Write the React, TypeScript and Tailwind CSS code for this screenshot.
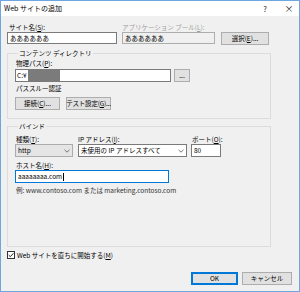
import React from "react";

const font = { fontFamily: '"Noto Sans CJK JP", "Noto Sans", sans-serif' };

function U({ c }: { c: string }) {
  return <span className="underline underline-offset-[1px]">{c}</span>;
}

function Chevron() {
  return (
    <svg width="6" height="4" viewBox="0 0 6 4" className="shrink-0">
      <path d="M0.5 0.8 L3 3.2 L5.5 0.8" fill="none" stroke="#555" strokeWidth="0.8" />
    </svg>
  );
}

function Btn({ children, w, def }: { children: React.ReactNode; w: string; def?: boolean }) {
  return (
    <div
      className={`${w} h-[13px] flex items-center justify-center bg-[#e1e1e1] border ${
        def ? "border-[#0078d7] shadow-[inset_0_0_0_1px_#0078d7]" : "border-[#adadad]"
      } text-black leading-none whitespace-nowrap overflow-visible`}
    >
      {children}
    </div>
  );
}

export default function App() {
  return (
    <div
      className="w-[300px] h-[292px] border border-[#6ea6e0] bg-[#f0f0f0] flex flex-col text-[6.5px] text-black overflow-hidden whitespace-nowrap"
      style={font}
    >
      {/* title bar */}
      <div className="h-[15px] bg-white flex items-center pl-[3px] shrink-0">
        <span className="text-[7px] leading-none">Web サイトの追加</span>
        <span className="ml-auto w-[10px] text-center text-[7.5px] leading-none text-[#222]">?</span>
        <span className="ml-[14px] mr-[5px] w-[10px] text-center text-[9px] leading-none text-[#222]">×</span>
      </div>

      <div className="pl-[6px] flex flex-col">
        {/* row 1 */}
        <div className="mt-[7px] flex">
          <div className="w-[110px] flex flex-col">
            <div className="h-[8px] leading-[8px] pl-[2px]">
              サイト名(<U c="S" />):
            </div>
            <div className="mt-[1px] h-[12px] border border-[#7a7a7a] bg-white flex items-center pl-[2px] leading-none">
              ああああああ
            </div>
          </div>
          <div className="ml-[5px] w-[93px] flex flex-col">
            <div className="h-[8px] leading-[8px] text-[#a0a0a0]">
              アプリケーション プール(<U c="L" />):
            </div>
            <div className="mt-[1px] h-[12px] border border-[#adadad] bg-[#f0f0f0] flex items-center pl-[2px] leading-none">
              ああああああ
            </div>
          </div>
          <div className="ml-[6px] flex flex-col">
            <div className="h-[8px]" />
            <div className="mt-[1px]">
              <Btn w="w-[48px]">
                選択(<U c="E" />)...
              </Btn>
            </div>
          </div>
        </div>

        {/* content directory */}
        <fieldset className="mt-[4px] w-[264px] h-[70px] border border-[#dcdcdc] pl-[7px]">
          <legend className="ml-[3px] px-[1px] leading-[8px] h-[8px]">コンテンツ ディレクトリ</legend>
          <div className="mt-[2px] h-[8px] leading-[8px] pl-[1px]">
            物理パス(<U c="P" />):
          </div>
          <div className="mt-[2px] flex">
            <div className="w-[156px] h-[13px] border border-[#7a7a7a] bg-white flex items-stretch leading-none">
              <span className="pl-[1px] flex items-center">C:¥</span>
              <span className="ml-[1px] w-[32px] bg-[#7b7b7b]" />
            </div>
            <div className="ml-[3px]">
              <Btn w="w-[16px]">...</Btn>
            </div>
          </div>
          <div className="mt-[2px] h-[8px] leading-[8px] pl-[1px]">パススルー認証</div>
          <div className="mt-[5px] flex gap-[6px]">
            <Btn w="w-[45px]">
              接続(<U c="C" />)...
            </Btn>
            <Btn w="w-[45px]">
              <span className="tracking-[-0.2px]">
                テスト設定(<U c="G" />)...
              </span>
            </Btn>
          </div>
        </fieldset>

        {/* bind */}
        <fieldset className="mt-[3px] w-[264px] h-[125px] border border-[#dcdcdc] pl-[7px]">
          <legend className="ml-[3px] px-[1px] leading-[8px] h-[8px]">バインド</legend>
          <div className="mt-[5px] flex">
            <div className="w-[58px] flex flex-col">
              <div className="h-[8px] leading-[8px] pl-[1px]">
                種類(<U c="T" />):
              </div>
              <div className="mt-[1px] h-[13px] border border-[#acacac] bg-[#e5e5e5] flex items-center pl-[2px] pr-[2px] leading-none">
                <span>http</span>
                <span className="ml-auto">
                  <Chevron />
                </span>
              </div>
            </div>
            <div className="ml-[5px] w-[109px] flex flex-col">
              <div className="h-[8px] leading-[8px]">
                IP アドレス(<U c="I" />):
              </div>
              <div className="mt-[1px] h-[13px] border border-[#7a7a7a] bg-white flex items-center pl-[2px] pr-[2px] leading-none">
                <span>未使用の IP アドレスすべて</span>
                <span className="ml-auto">
                  <Chevron />
                </span>
              </div>
            </div>
            <div className="ml-[4px] w-[30px] flex flex-col">
              <div className="h-[8px] leading-[8px] pl-[1px] whitespace-nowrap">
                ポート(<U c="O" />):
              </div>
              <div className="mt-[1px] h-[13px] border border-[#7a7a7a] bg-white flex items-center pl-[2px] leading-none">
                80
              </div>
            </div>
          </div>
          <div className="mt-[4px] h-[8px] leading-[8px] pl-[1px]">
            ホスト名(<U c="H" />):
          </div>
          <div className="mt-[1px] w-[154px] h-[13px] border border-[#0078d7] bg-white flex items-center pl-[2px] leading-none">
            <span>aaaaaaaa.com</span>
            <span className="ml-[0.5px] w-px h-[8px] bg-black" />
          </div>
          <div className="mt-[3px] h-[8px] leading-[8px] pl-[1px] text-[#333]">
            例: www.contoso.com または marketing.contoso.com
          </div>
        </fieldset>

        {/* checkbox */}
        <div className="mt-[4px] h-[8px] flex items-center">
          <svg width="8" height="8" viewBox="0 0 8 8" className="shrink-0">
            <rect x="0.5" y="0.5" width="7" height="7" fill="#fff" stroke="#333" strokeWidth="1" />
            <path d="M1.7 4.1 L3.3 5.7 L6.4 2.3" fill="none" stroke="#222" strokeWidth="1" />
          </svg>
          <span className="ml-[2px] leading-[8px]">
            Web サイトを直ちに開始する(<U c="M" />)
          </span>
        </div>

        {/* buttons */}
        <div className="mt-[13px] flex">
          <div className="ml-[184px]">
            <Btn w="w-[47px]" def>
              OK
            </Btn>
          </div>
          <div className="ml-[4px]">
            <Btn w="w-[50px]">キャンセル</Btn>
          </div>
        </div>
      </div>
    </div>
  );
}
